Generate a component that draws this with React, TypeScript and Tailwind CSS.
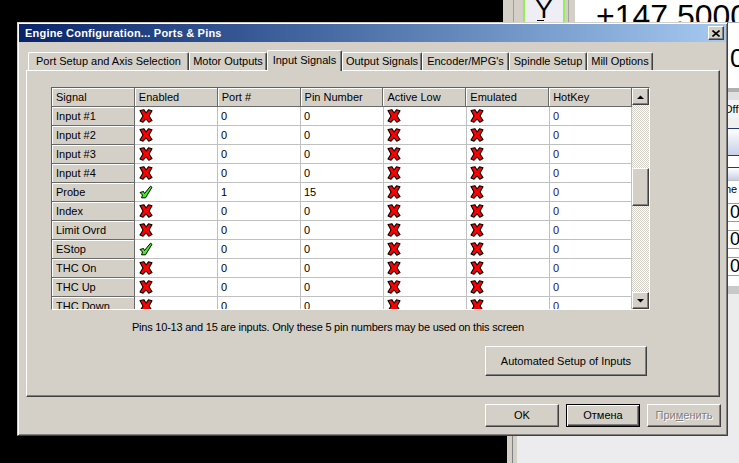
import React from "react";

const rows = [
  { name: "Input #1", en: false, port: "0", pin: "0" },
  { name: "Input #2", en: false, port: "0", pin: "0" },
  { name: "Input #3", en: false, port: "0", pin: "0" },
  { name: "Input #4", en: false, port: "0", pin: "0" },
  { name: "Probe", en: true, port: "1", pin: "15" },
  { name: "Index", en: false, port: "0", pin: "0" },
  { name: "Limit Ovrd", en: false, port: "0", pin: "0" },
  { name: "EStop", en: true, port: "0", pin: "0" },
  { name: "THC On", en: false, port: "0", pin: "0" },
  { name: "THC Up", en: false, port: "0", pin: "0" },
  { name: "THC Down", en: false, port: "0", pin: "0" },
];

const headers = ["Signal", "Enabled", "Port #", "Pin Number", "Active Low", "Emulated", "HotKey"];

const tabs = [
  { label: "Port Setup and Axis Selection", w: "w-[161px]" },
  { label: "Motor Outputs", w: "w-[78px]" },
  { label: "Input Signals", w: "w-[75px]", active: true },
  { label: "Output Signals", w: "w-[80px]" },
  { label: "Encoder/MPG's", w: "w-[87px]" },
  { label: "Spindle Setup", w: "w-[78px]" },
  { label: "Mill Options", w: "w-[66px]" },
];

// classic raised 3D edge, no text colour so callers can set it
const btn =
  "flex items-center justify-center bg-[#D4D0C8] border border-t-white border-l-white border-r-[#404040] border-b-[#404040] shadow-[inset_-1px_-1px_0_#808080] text-[11px]";

const headCell =
  "h-[19px] flex items-center pl-[4px] bg-[#D4D0C8] border-r border-b border-r-[#6a6a6a] border-b-[#6a6a6a] shadow-[inset_1px_1px_0_#fff] text-[11px] text-black whitespace-nowrap overflow-hidden";

const dataCell =
  "h-[19px] flex items-center bg-white border-r border-b border-[#C0C0C0] text-[11px]";

function RedX() {
  return (
    <svg width="14" height="14" viewBox="0 0 14 14">
      <path
        d="M1 1.5 L5 0.8 L7 4 L9.5 0.8 L13 1.8 L10 7 L13 11.5 L9.8 13.2 L7 10 L4 13.2 L1 12 L4 7 Z"
        fill="#ff0000"
        stroke="#000"
        strokeWidth="1.1"
        strokeLinejoin="round"
      />
    </svg>
  );
}

function GreenCheck() {
  return (
    <svg width="14" height="14" viewBox="0 0 14 14">
      <path
        d="M1 7.5 L4.5 6.5 L5.5 8.5 L11.5 1.2 L13 2.3 L6.5 12.8 L2.5 12.8 L3.5 10 Z"
        fill="#44ee22"
        stroke="#000"
        strokeWidth="1"
        strokeLinejoin="round"
      />
    </svg>
  );
}

function Arrow({ up }: { up?: boolean }) {
  return (
    <svg width="7" height="4" viewBox="0 0 7 4">
      <polygon points={up ? "0,4 3.5,0.5 7,4" : "0,0 3.5,3.5 7,0"} fill="#000" />
    </svg>
  );
}

function Grid() {
  return (
    <div className="ml-[24px] mt-[16px] w-[599px] h-[223px] flex border border-t-[#606060] border-l-[#606060] border-r-white border-b-white">
      <div className="flex flex-col overflow-hidden w-[581px]">
        <div className="flex shrink-0">
          <div className={`${headCell} w-[83px]`}>{headers[0]}</div>
          <div className={`${headCell} w-[83px]`}>{headers[1]}</div>
          <div className={`${headCell} w-[83px]`}>{headers[2]}</div>
          <div className={`${headCell} w-[83px]`}>{headers[3]}</div>
          <div className={`${headCell} w-[83px]`}>{headers[4]}</div>
          <div className={`${headCell} w-[83px]`}>{headers[5]}</div>
          <div className={`${headCell} w-[83px]`}>{headers[6]}</div>
        </div>
        {rows.map((r) => (
          <div key={r.name} className="flex shrink-0">
            <div className={`${headCell} w-[83px]`}>{r.name}</div>
            <div className={`${dataCell} w-[83px] pl-[4px]`}>{r.en ? <GreenCheck /> : <RedX />}</div>
            <div className={`${dataCell} w-[83px] pl-[3px] text-black`}>{r.port}</div>
            <div className={`${dataCell} w-[83px] pl-[3px] text-black`}>{r.pin}</div>
            <div className={`${dataCell} w-[83px] pl-[3px]`}>
              <RedX />
            </div>
            <div className={`${dataCell} w-[83px] pl-[3px]`}>
              <RedX />
            </div>
            <div className={`${dataCell} w-[82px] pl-[3px] text-[#221166]`}>0</div>
          </div>
        ))}
      </div>
      <div className="w-[17px] flex flex-col">
        <div className={`${btn} h-[17px] shrink-0`}>
          <Arrow up />
        </div>
        <div className="flex-1 flex flex-col bg-[image:repeating-conic-gradient(#d4d0c8_0%_25%,#ffffff_0%_50%)] bg-[length:2px_2px]">
          <div className={`${btn} mt-[63px] h-[38px]`} />
        </div>
        <div className={`${btn} h-[17px] shrink-0`}>
          <Arrow />
        </div>
      </div>
    </div>
  );
}

function RightStrip() {
  const box = "h-[19px] bg-white border-y border-[#9a9a9a] text-[18px] leading-[17px] pl-[2px] text-black";
  return (
    <div className="w-[11px] flex flex-col overflow-hidden bg-white">
      <div className="h-[22px] bg-white border-t border-[#b0b0b0]" />
      <div className="h-[28px] bg-white text-[26px] leading-[28px] pl-[2px] text-black">0</div>
      <div className="h-[16px] bg-white" />
      <div className="h-[4px] bg-[#b0b0b0]" />
      <div className="h-[8px] bg-[#e0e0e0]" />
      <div className="h-[18px] bg-[#f4f4f4] text-[11px] leading-[18px] -ml-[4px] text-black">Off</div>
      <div className="h-[10px] bg-[#f0f0f0]" />
      <div className="h-[27px] bg-linear-to-b from-white to-[#c8d0e8] border-t border-[#203880]" />
      <div className="h-[12px] bg-white border-t border-[#203880]" />
      <div className="h-[13px] bg-linear-to-b from-white to-[#c8d0e8] border-t border-[#203880]" />
      <div className="h-[17px] bg-white border-t border-[#c0c0c0] text-[11px] leading-[16px] -ml-[3px] text-black">he</div>
      <div className="h-[6px] bg-white" />
      <div className={box}>0</div>
      <div className="h-[8px] bg-white" />
      <div className={box}>0</div>
      <div className="h-[8px] bg-white" />
      <div className={box}>0</div>
      <div className="h-[10px] bg-white" />
      <div className="h-[8px] bg-[#c8c8c8]" />
      <div className="flex-1 bg-[#ececec]" />
    </div>
  );
}

function AppBehind() {
  return (
    <div className="absolute left-[503px] top-0 right-0 bottom-0 flex flex-col bg-[#D4D0C8]">
      <div className="h-[22px] flex shrink-0">
        <div className="w-[20px] flex">
          <div className="w-[10px] bg-[#D4D0C8]" />
          <div className="w-px bg-[#a0a0a0]" />
          <div className="flex-1 bg-[#D4D0C8]" />
        </div>
        <div className="w-[42px] bg-[#eeeef4] border-x-2 border-[#98ec58] flex flex-col items-center overflow-hidden">
          <span className="text-[26px] leading-[26px] -mt-[4px] text-black">Y</span>
          <div className="w-[7px] h-px bg-black -ml-[8px] -mt-[2px]" />
        </div>
        <div className="w-[10px] flex">
          <div className="w-[3px] bg-[#D4D0C8]" />
          <div className="w-px bg-[#a0a0a0]" />
          <div className="flex-1 bg-[#D4D0C8]" />
        </div>
        <div className="flex-1 bg-white overflow-hidden whitespace-nowrap pl-[21px] text-[32px] leading-[32px] text-black">
          +147.5000
        </div>
      </div>
      <div className="flex-1 flex">
        <div className="flex-1 bg-[#D4D0C8]" />
        <RightStrip />
      </div>
      <div className="h-[27px] flex shrink-0">
        <div className="w-[4px] bg-black" />
        <div className="w-[5px] bg-[#D4D0C8]" />
        <div className="w-px bg-[#808080]" />
        <div className="w-[4px] bg-[#D4D0C8]" />
        <div className="flex-1 bg-[#ececee]" />
      </div>
    </div>
  );
}

function Dialog() {
  return (
    <div className="absolute left-[17px] top-[22px] w-[711px] h-[414px] bg-[#D4D0C8] border border-t-[#D4D0C8] border-l-[#D4D0C8] border-r-[#404040] border-b-[#404040] shadow-[inset_1px_1px_0_#fff,inset_-1px_-1px_0_#808080] p-px flex flex-col">
      <div className="h-[18px] shrink-0 flex items-center justify-between bg-linear-to-r from-[#0A246A] to-[#A6CAF0] pl-[6px] pr-[2px]">
        <span className="text-[11px] font-bold tracking-[0.2px] text-white whitespace-nowrap">
          Engine Configuration... Ports &amp; Pins
        </span>
        <div className={`${btn} w-[16px] h-[14px]`}>
          <svg width="8" height="7" viewBox="0 0 8 7">
            <path d="M0.5 0.5 L7.5 6.5 M7.5 0.5 L0.5 6.5" stroke="#000" strokeWidth="1.6" />
          </svg>
        </div>
      </div>

      <div className="ml-[9px] mt-[8px] h-[20px] flex items-end shrink-0 relative z-10">
        {tabs.map((t) => (
          <div
            key={t.label}
            className={`${t.w} ${
              t.active ? "h-[21px] -mb-px pb-[2px]" : "h-[18px]"
            } flex items-center justify-center bg-[#D4D0C8] border-t border-l border-r border-t-white border-l-white border-r-[#404040] rounded-t-[2px] shadow-[inset_-1px_0_0_#808080] text-[11px] text-black whitespace-nowrap`}
          >
            {t.label}
          </div>
        ))}
      </div>

      <div className="ml-[7px] w-[694px] h-[327px] shrink-0 flex flex-col items-start border border-t-white border-l-white border-r-[#404040] border-b-[#404040] shadow-[inset_-1px_-1px_0_#808080]">
        <Grid />
        <p className="ml-[105px] mt-[11px] text-[11px] leading-[13px] tracking-[-0.22px] text-black whitespace-nowrap">
          Pins 10-13 and 15 are inputs. Only these 5 pin numbers may be used on this screen
        </p>
        <div className={`${btn} text-black self-end mr-[72px] mt-[12px] w-[162px] h-[30px]`}>
          Automated Setup of Inputs
        </div>
      </div>

      <div className="mt-[7px] flex justify-end gap-[7px] pr-[5px]">
        <div className={`${btn} text-black w-[74px] h-[23px]`}>OK</div>
        <div className="w-[74px] h-[23px] flex items-center justify-center bg-[#D4D0C8] border border-black shadow-[inset_1px_1px_0_#fff,inset_-1px_-1px_0_#404040,inset_-2px_-2px_0_#808080] text-[11px] text-black">
          Отмена
        </div>
        <div className={`${btn} w-[74px] h-[23px] text-[#808080] [text-shadow:1px_1px_0_#fff]`}>
          При<span className="underline">м</span>енить
        </div>
      </div>
    </div>
  );
}

export default function App() {
  return (
    <div className="relative w-[739px] h-[463px] bg-black overflow-hidden font-['Liberation_Sans',Arial,sans-serif]">
      <AppBehind />
      <Dialog />
    </div>
  );
}
